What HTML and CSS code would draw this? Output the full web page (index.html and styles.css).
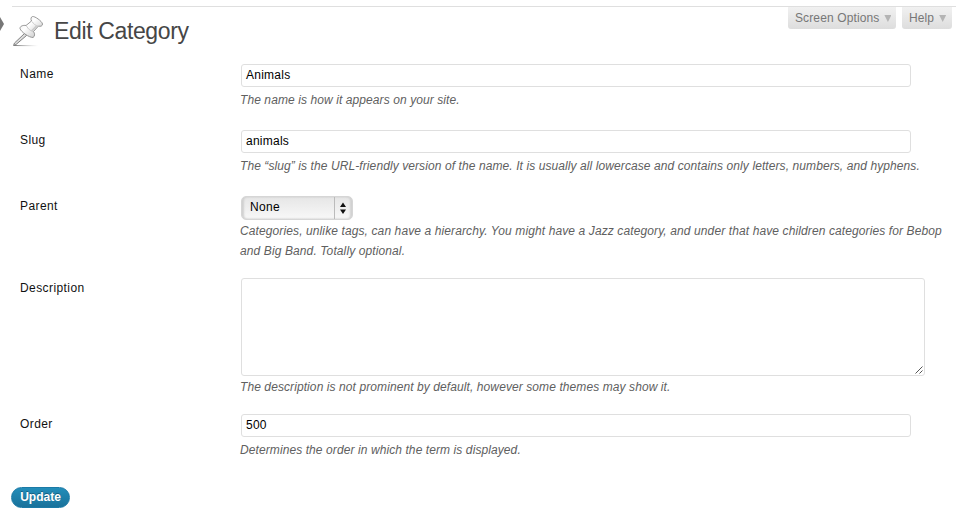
FILE: index.html
```html
<!DOCTYPE html>
<html lang="en">
<head>
<meta charset="utf-8">
<title>Edit Category</title>
<link rel="stylesheet" href="styles.css">
</head>
<body>
<svg class="menu-arrow" width="5" height="24" viewBox="0 0 5 24"><path d="M0 5 4 12 0 19z" fill="#777"/></svg>
<header class="header">
  <div class="heading">
    <svg class="pin" width="34" height="34" viewBox="0 0 34 34">
      <defs>
        <linearGradient id="metal" x1="0" y1="0" x2="1" y2="1"><stop offset="0" stop-color="#e4e4e4"/><stop offset=".4" stop-color="#fff"/><stop offset="1" stop-color="#bbb"/></linearGradient>
        <linearGradient id="shade"><stop offset="0" stop-color="#777"/><stop offset="1" stop-color="#bbb" stop-opacity="0"/></linearGradient>
      </defs>
      <path d="M2 31.500L26 31.600" stroke="url(#shade)" stroke-width="1.2"/>
      <path d="M12.500 19.500 14.500 21.500 4 30.500 1.500 31.500 2.500 29z" fill="#ddd" stroke="#777" stroke-width=".9"/>
      <path d="M20.500 2.500C22.500 2 30 7 30.500 10C30.500 12 28.500 12.800 26.500 12L21.500 17.500C23 19.500 23 22.500 21 23.500C17 23.500 9 18 8 14.500C8 12 11 11 14 11.500L19.500 7C18.500 5 19 3 20.500 2.500z" fill="url(#metal)" stroke="#8c8c8c" stroke-width=".9"/>
      <path d="M20 7.500C21.500 10 23.500 11.500 26 12M14.500 12C16 15 18.500 16.800 21 17.500" fill="none" stroke="#ccc" stroke-width="1"/>
      <path d="M24.500 12 19.500 17" stroke="#c8c8c8" stroke-width="1.500"/>
    </svg>
    <h1>Edit Category</h1>
  </div>
  <nav class="tabs">
    <a class="tab tab-options"><span>Screen Options</span><i></i></a>
    <a class="tab tab-help"><span>Help</span><i></i></a>
  </nav>
</header>
<form class="form">
  <div class="row row-name">
    <label>Name</label>
    <div><div class="input">Animals</div><p>The name is how it appears on your site.</p></div>
  </div>
  <div class="row row-slug">
    <label>Slug</label>
    <div><div class="input">animals</div><p>The “slug” is the URL-friendly version of the name. It is usually all lowercase and contains only letters, numbers, and hyphens.</p></div>
  </div>
  <div class="row row-parent">
    <label>Parent</label>
    <div><div class="select"><span>None</span><svg width="18" height="22" viewBox="0 0 18 22"><path d="M.5 0V22" stroke="#bbb"/><path d="M6 10 9 5.500 12 10zM6 12.500H12L9 17z" fill="#111"/></svg></div><p>Categories, unlike tags, can have a hierarchy. You might have a Jazz category, and under that have children categories for Bebop<br>and Big Band. Totally optional.</p></div>
  </div>
  <div class="row row-description">
    <label>Description</label>
    <div><div class="textarea"><svg width="8" height="8" viewBox="0 0 8 8"><path d="M.5 7.500 7.500.5M4.500 7.500 7.500 4.500" stroke="#555" fill="none"/></svg></div><p>The description is not prominent by default, however some themes may show it.</p></div>
  </div>
  <div class="row row-order">
    <label>Order</label>
    <div><div class="input">500</div><p>Determines the order in which the term is displayed.</p></div>
  </div>
  <button class="update" type="button">Update</button>
</form>
</body>
</html>
```
FILE: styles.css
```css
* { box-sizing: border-box; }
body {
  margin: 0;
  height: 526px;
  overflow: hidden;
  background: #fff;
  color: #222;
  font: 12px/20px "Liberation Sans", Arial, sans-serif;
}
.menu-arrow { position: absolute; left: 0; top: 12px; }
.header {
  display: flex;
  justify-content: space-between;
  height: 58px;
  margin: 6px 6px 0 12px;
  border-top: 1px solid #dfdfdf;
}
.heading { display: flex; }
.pin { display: block; margin: 7px 0 0; }
h1 {
  margin: 6px 0 0 8px;
  color: #464646;
  font-size: 23px;
  line-height: 36px;
  font-weight: 400;
  letter-spacing: -.36px;
}
.tabs { display: flex; gap: 6px; margin-right: 4px; }
.tab {
  display: flex;
  height: 22px;
  padding: 0 0 0 7px;
  border-radius: 0 0 3px 3px;
  background: linear-gradient(#f1f1f1, #ddd);
  color: #777;
  line-height: 22px;
  letter-spacing: .12px;
}
.tab-options { width: 108px; }
.tab-help { width: 50px; }
.tab i {
  margin: 8px 0 0 5px;
  width: 7px;
  height: 7px;
  background: #b4b4b4;
  clip-path: polygon(0 0, 100% 0, 50% 100%);
}
.form { padding-left: 11px; }
.row { display: grid; grid-template-columns: 220px 702px; padding-left: 9px; }
.row-name, .row-slug { height: 66px; }
.row-parent { height: 82px; }
.row-description { height: 136px; }
.row-order { height: 73px; }
label { color: #111; letter-spacing: .42px; }
.row-name label { letter-spacing: .5px; }
.row > div { padding-left: 1px; }
.input {
  width: 670px;
  height: 23px;
  padding-left: 4px;
  border: 1px solid #dfdfdf;
  border-radius: 3px;
  color: #000;
  line-height: 21px;
  letter-spacing: .25px;
}
p {
  margin: 3px 0 0 -1px;
  color: #606060;
  font-style: italic;
  line-height: 20px;
  white-space: nowrap;
  letter-spacing: .09px;
}
.select {
  display: flex;
  justify-content: space-between;
  width: 112px;
  height: 24px;
  padding-left: 8px;
  border: 1px solid #d6d6d6;
  border-radius: 5px;
  background: linear-gradient(#e6e6e6, #f8f8f8);
  box-shadow: inset 2px 0 2px #d0d0d0, inset -2px 0 2px #d0d0d0;
  color: #000;
  line-height: 21px;
  letter-spacing: .3px;
}
.row-parent p { margin-top: 1px; letter-spacing: .11px; }
.textarea {
  display: flex;
  justify-content: flex-end;
  align-items: flex-end;
  width: 684px;
  height: 98px;
  padding: 1px;
  border: 1px solid #dfdfdf;
  border-radius: 3px;
}
.row-description p { margin-top: 1px; }
.update {
  display: block;
  width: 59px;
  height: 21px;
  padding: 0;
  border: 1px solid #1b7aa6;
  border-radius: 11px;
  background: linear-gradient(#238db9, #19729b);
  color: #fff;
  font: bold 12px/19px "Liberation Sans", Arial, sans-serif;
  text-shadow: 0 -1px 0 rgba(0, 0, 0, .3);
}
```
